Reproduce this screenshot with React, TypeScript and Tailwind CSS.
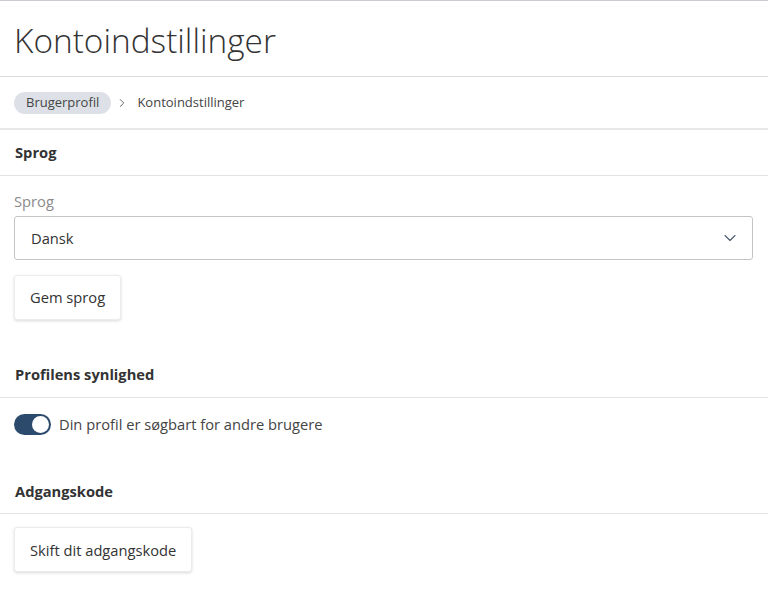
import React, { useState } from 'react';
import { ChevronRight, ChevronDown } from 'lucide-react';

const SectionHeading: React.FC<{ title: string; className?: string }> = ({ title, className }) => (
  <div className={`h-[46px] flex items-center px-[15px] border-b border-[#e3e3e3] ${className ?? ''}`}>
    <h2 className="text-[14.7px] font-bold text-[#333]">{title}</h2>
  </div>
);

const App: React.FC = () => {
  const [visible, setVisible] = useState(true);

  return (
    <div className="min-h-[591px] bg-white font-['Open_Sans',sans-serif] text-[#333] border-t border-[#c8cbd0]">
      {/* Titel */}
      <div className="h-[76px] flex items-center px-[14px] border-b border-[#dcdcdc]">
        <h1 className="text-[33.4px] font-light text-[#333] leading-none pt-[4px]">Kontoindstillinger</h1>
      </div>

      {/* Brødkrumme */}
      <div className="h-[53px] flex items-center px-[14px] border-b-2 border-[#e8e8e8]">
        <span className="bg-[#dde1e7] text-[#444] text-[13px] rounded-full h-[22px] px-[12px] flex items-center">
          Brugerprofil
        </span>
        <ChevronRight className="w-[14px] h-[14px] text-[#555] ml-[4px] mr-[8px]" strokeWidth={1.5} />
        <span className="text-[13px] text-[#444]">Kontoindstillinger</span>
      </div>

      {/* Sprog */}
      <SectionHeading title="Sprog" />
      <div className="px-[14px] pt-[16px]">
        <label className="block text-[14.7px] text-[#8a8a8a] leading-[19px]">Sprog</label>
        <div className="mt-[5px] h-[44px] w-[739px] border border-[#c4c4c4] rounded-[3px] flex items-center justify-between pl-[16px] pr-[12px]">
          <span className="text-[14.7px] text-[#333]">Dansk</span>
          <ChevronDown className="w-[20px] h-[20px] text-[#4a5a6e]" strokeWidth={1.3} />
        </div>
        <button className="mt-[15px] h-[45px] px-[15px] bg-white border border-[#ececec] rounded-[3px] shadow-[0_1px_3px_rgba(0,0,0,0.15)] text-[14.7px] text-[#333]">
          Gem sprog
        </button>
      </div>

      {/* Profilens synlighed */}
      <SectionHeading title="Profilens synlighed" className="mt-[32px]" />
      <div className="px-[14px] pt-[15px] flex items-center gap-[8px]">
        <button
          onClick={() => setVisible(!visible)}
          className={`w-[37px] h-[21px] rounded-full flex items-center px-[2px] ${visible ? 'bg-[#2c4a6c] justify-end' : 'bg-[#c4c4c4] justify-start'}`}
        >
          <span className="w-[17px] h-[17px] rounded-full bg-white block" />
        </button>
        <span className="text-[14.7px] text-[#444]">Din profil er søgbart for andre brugere</span>
      </div>

      {/* Adgangskode */}
      <SectionHeading title="Adgangskode" className="mt-[33px]" />
      <div className="px-[14px] pt-[13px]">
        <button className="h-[45px] px-[15px] bg-white border border-[#ececec] rounded-[3px] shadow-[0_1px_3px_rgba(0,0,0,0.15)] text-[14.7px] text-[#333]">
          Skift dit adgangskode
        </button>
      </div>
    </div>
  );
};

export default App;
